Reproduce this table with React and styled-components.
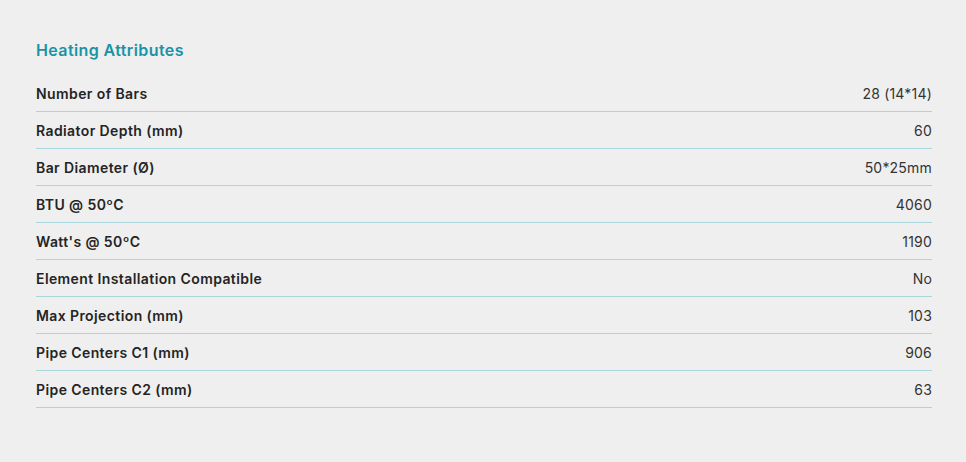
import React from 'react';
import styled, { createGlobalStyle } from 'styled-components';

const GlobalStyle = createGlobalStyle`
    body {
        margin: 0;
        background-color: #efefef;
        font-family: Inter, "Noto Sans", sans-serif;
    }
`;

const Section = styled.section`
    padding: 38px 34px 0 36px;
`;

const Title = styled.h3`
    margin: 0 0 13px;
    font-size: 16px;
    font-weight: 600;
    line-height: 24px;
    letter-spacing: 0.4px;
    color: #1a93a4;
`;

const Table = styled.div`
    display: flex;
    flex-direction: column;
`;

const Row = styled.div`
    display: flex;
    justify-content: space-between;
    align-items: center;
    height: 36px;
    border-bottom: 1px solid #a9d6dd;
    font-size: 14px;
    color: #242424;
`;

const Label = styled.span`
    font-weight: 600;
    letter-spacing: 0.4px;
`;

const Value = styled.span`
    font-weight: 400;
    letter-spacing: 0.2px;
    color: #333;
`;

const attributes = [
    ['Number of Bars', '28 (14*14)'],
    ['Radiator Depth (mm)', '60'],
    ['Bar Diameter (Ø)', '50*25mm'],
    ['BTU @ 50ºC', '4060'],
    ["Watt's @ 50ºC", '1190'],
    ['Element Installation Compatible', 'No'],
    ['Max Projection (mm)', '103'],
    ['Pipe Centers C1 (mm)', '906'],
    ['Pipe Centers C2 (mm)', '63'],
];

const App = () => {
    return (
        <>
            <GlobalStyle />
            <Section>
                <Title>Heating Attributes</Title>
                <Table>
                    {attributes.map(([label, value]) => (
                        <Row key={label}>
                            <Label>{label}</Label>
                            <Value>{value}</Value>
                        </Row>
                    ))}
                </Table>
            </Section>
        </>
    );
};

export default App;
